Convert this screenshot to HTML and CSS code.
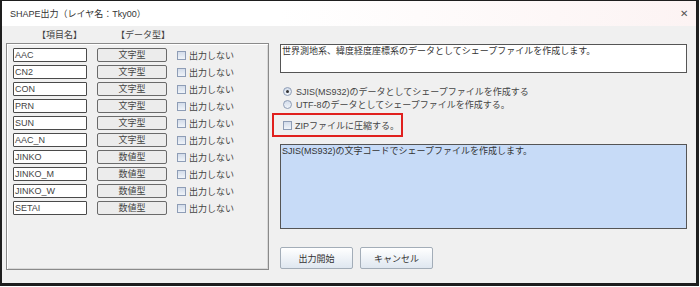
FILE: index.html
```html
<!DOCTYPE html>
<html lang="ja">
<head>
  <meta charset="UTF-8" />
  <title>SHAPE出力</title>
  <link rel="stylesheet" href="styles.css">
</head>
<body>
  <div class="window">
    <div class="titlebar">
      <span class="title">SHAPE出力（レイヤ名：Tky00）</span>
      <span class="close">✕</span>
    </div>
    <div class="main">
      <div class="left">
        <div class="headers">
          <span class="head-name">【項目名】</span>
          <span class="head-type">【データ型】</span>
        </div>
        <div class="panel">
          <div class="row"><div class="field">AAC</div><div class="type">文字型</div><label class="chk"><span class="box"></span>出力しない</label></div>
          <div class="row"><div class="field">CN2</div><div class="type">文字型</div><label class="chk"><span class="box"></span>出力しない</label></div>
          <div class="row"><div class="field">CON</div><div class="type">文字型</div><label class="chk"><span class="box"></span>出力しない</label></div>
          <div class="row"><div class="field">PRN</div><div class="type">文字型</div><label class="chk"><span class="box"></span>出力しない</label></div>
          <div class="row"><div class="field">SUN</div><div class="type">文字型</div><label class="chk"><span class="box"></span>出力しない</label></div>
          <div class="row"><div class="field">AAC_N</div><div class="type">文字型</div><label class="chk"><span class="box"></span>出力しない</label></div>
          <div class="row"><div class="field">JINKO</div><div class="type">数値型</div><label class="chk"><span class="box"></span>出力しない</label></div>
          <div class="row"><div class="field">JINKO_M</div><div class="type">数値型</div><label class="chk"><span class="box"></span>出力しない</label></div>
          <div class="row"><div class="field">JINKO_W</div><div class="type">数値型</div><label class="chk"><span class="box"></span>出力しない</label></div>
          <div class="row"><div class="field">SETAI</div><div class="type">数値型</div><label class="chk"><span class="box"></span>出力しない</label></div>
        </div>
      </div>
      <div class="right">
        <div class="desc">世界測地系、緯度経度座標系のデータとしてシェープファイルを作成します。</div>
        <div class="radios">
          <label class="radio"><span class="dot checked"></span>SJIS(MS932)のデータとしてシェープファイルを作成する</label>
          <label class="radio"><span class="dot"></span>UTF-8のデータとしてシェープファイルを作成する。</label>
        </div>
        <div class="zip">
          <label class="chk"><span class="box"></span>ZIPファイルに圧縮する。</label>
        </div>
        <div class="info">SJIS(MS932)の文字コードでシェープファイルを作成します。</div>
        <div class="actions">
          <button class="btn">出力開始</button>
          <button class="btn">キャンセル</button>
        </div>
      </div>
    </div>
  </div>
</body>
</html>
```

FILE: styles.css
```css
body {
  margin: 0;
  background: #ffffff;
  font-family: "Liberation Sans", "Noto Sans CJK JP", sans-serif;
  font-size: 9px;
  color: #333;
}
.window {
  box-sizing: border-box;
  width: 699px;
  height: 286px;
  background: #f0f0f0;
  border-style: solid;
  border-color: #1e1e1e;
  border-width: 1px 3px 3px 2px;
  display: flex;
  flex-direction: column;
}
.titlebar {
  height: 25px;
  display: flex;
  align-items: center;
  justify-content: space-between;
  padding: 0 8px 0 8px;
  background: linear-gradient(90deg, #ffffff 40%, #fcf3f3);
}
.title {
  color: #333;
}
.close {
  font-size: 10px;
  color: #555;
}
.main {
  display: flex;
  gap: 11px;
  padding: 0 9px 0 4px;
}
.left {
  width: 263px;
  display: flex;
  flex-direction: column;
}
.headers {
  height: 17px;
  display: flex;
  align-items: center;
  padding-left: 31px;
  color: #444;
}
.head-name {
  width: 79px;
}
.panel {
  height: 227px;
  box-sizing: border-box;
  border: 1px solid #8a8a8a;
  box-shadow: inset 1px 1px 0 #ffffff, inset -1px -1px 0 #d8d8d8;
  padding: 4px 0 0 6px;
  display: flex;
  flex-direction: column;
  gap: 3px;
}
.row {
  display: flex;
  align-items: center;
  height: 14px;
}
.field {
  box-sizing: border-box;
  width: 74px;
  height: 14px;
  line-height: 12px;
  background: #fff;
  border: 1px solid #4a4a4a;
  border-radius: 1px;
  padding-left: 1px;
  color: #444;
}
.type {
  box-sizing: border-box;
  width: 70px;
  height: 14px;
  line-height: 12px;
  margin-left: 10px;
  text-align: center;
  background: #ececec;
  border: 1px solid #6a6a6a;
  border-radius: 2px;
  color: #444;
}
.chk {
  display: flex;
  align-items: center;
  margin-left: 10px;
  color: #444;
}
.box {
  box-sizing: border-box;
  width: 9px;
  height: 9px;
  margin-right: 3px;
  border: 1px solid #8e9db6;
  background: linear-gradient(#d3dcea, #f0f4f9);
}
.right {
  flex: 1;
  display: flex;
  flex-direction: column;
  padding-top: 18px;
}
.desc {
  box-sizing: border-box;
  height: 29px;
  background: #fff;
  border: 1px solid #555;
  padding: 1px;
  line-height: 11px;
}
.radios {
  margin-top: 12px;
  display: flex;
  flex-direction: column;
  padding-left: 3px;
}
.radio {
  height: 13px;
  display: flex;
  align-items: center;
  color: #444;
}
.dot {
  box-sizing: border-box;
  width: 9px;
  height: 9px;
  margin-right: 4px;
  border: 1px solid #8e9db6;
  border-radius: 50%;
  background: linear-gradient(#d3dcea, #f0f4f9);
  display: flex;
  align-items: center;
  justify-content: center;
}
.dot.checked::after {
  content: "";
  width: 3px;
  height: 3px;
  border-radius: 50%;
  background: #333;
}
.zip {
  box-sizing: border-box;
  width: 131px;
  height: 24px;
  margin: 2px 0 0 -8px;
  border: 2px solid #e0201e;
  display: flex;
  align-items: center;
}
.zip .chk {
  margin-left: 9px;
}
.info {
  box-sizing: border-box;
  height: 85px;
  margin-top: 7px;
  background: #c7dbf7;
  border: 1px solid #555;
  padding: 1px;
  line-height: 11px;
}
.actions {
  margin-top: 18px;
  display: flex;
  gap: 7px;
}
.btn {
  box-sizing: border-box;
  width: 73px;
  height: 22px;
  font-family: "Liberation Sans", "Noto Sans CJK JP", sans-serif;
  font-size: 9px;
  color: #333;
  background: linear-gradient(#ffffff, #dfe7f0);
  border: 1px solid #a3adb8;
  border-radius: 2px;
  padding: 0;
}
```
